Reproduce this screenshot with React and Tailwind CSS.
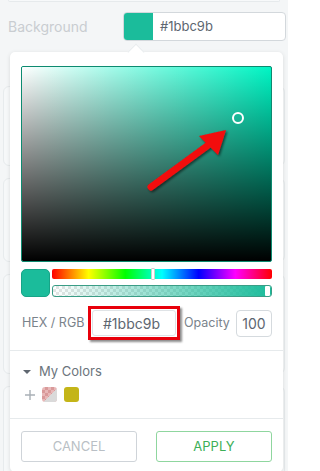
import React from 'react';

const font = { fontFamily: 'Inter, "Noto Sans", sans-serif' };

export default function App() {
  return (
    <div className="relative w-[288px] h-[471px] overflow-hidden bg-[#f4f6f7]" style={font}>
      {/* page behind the popover */}
      <div className="h-[2px] mx-[8px] rounded-b-md border-b border-x border-[#e6eaec] bg-[#f7f9fa]" />
      <div className="flex items-center h-[29px] mt-[10px] pl-[8px] pr-[2px] justify-between">
        <span className="text-[14px] text-[#c9cdd1]">Background</span>
        <div className="flex h-[29px] w-[163px] rounded-[4px] border border-[#d3d8dc] bg-white overflow-hidden">
          <div className="w-[29px] h-full bg-[#1bbc9b]" />
          <span className="flex items-center pl-[7px] text-[13px] text-[#5d6670]">#1bbc9b</span>
        </div>
      </div>
      <div className="flex flex-col gap-[12px] mt-[45px] px-[3px]">
        <div className="h-[80px] rounded-md border border-[#e7ebed] bg-[#f6f8f9]" />
        <div className="h-[84px] rounded-md border border-[#e7ebed] bg-[#f6f8f9]" />
        <div className="h-[100px] rounded-md border border-[#e7ebed] bg-[#f6f8f9]" />
        <div className="h-[100px] rounded-md border border-[#e7ebed] bg-[#f6f8f9]" />
      </div>

      {/* popover */}
      <div className="absolute left-[10px] top-[52px] w-[273px] rounded-[5px] bg-white shadow-[0_1px_4px_rgba(0,0,0,0.12)]">
        <div className="absolute -top-[6px] left-[120px] w-[12px] h-[12px] rotate-45 bg-white border-l border-t border-[#e8ecee]" />
        <div className="relative px-[11px] pt-[14px]">
          <div className="relative h-[196px] rounded-[2px] bg-[hsl(168,100%,48%)] overflow-hidden border border-[#0d8a70]">
            <div className="absolute inset-0 bg-gradient-to-r from-white to-transparent" />
            <div className="absolute inset-0 bg-gradient-to-b from-transparent to-black" />
            <div className="absolute left-[210px] top-[45px] w-[12px] h-[12px] rounded-full border-2 border-white" />
          </div>
          <svg className="absolute left-[129px] top-[75px]" width="100" height="80" viewBox="0 0 100 80">
            <defs>
              <filter id="sh" x="-20%" y="-20%" width="140%" height="140%">
                <feDropShadow dx="1.5" dy="1.5" stdDeviation="1" floodColor="#000" floodOpacity="0.55" />
              </filter>
            </defs>
            <g filter="url(#sh)">
              <line x1="12" y1="60" x2="68" y2="19" stroke="#f20d0d" strokeWidth="7" strokeLinecap="round" />
              <polygon points="87,3 60,9 79,28" fill="#f20d0d" />
            </g>
          </svg>
          <div className="flex gap-[2px] mt-[7px]">
            <div className="w-[29px] h-[28px] rounded-[5px] bg-[#1bbc9b] border border-[#17a487]" />
            <div className="flex-1 flex flex-col gap-[6px]">
              <div className="relative h-[10px] rounded-[2px] bg-[linear-gradient(to_right,#ff0000,#ffff00,#00ff00,#00ffff,#0000ff,#ff00ff,#ff0000)]">
                <div className="absolute left-[99px] -top-[1px] w-[4px] h-[12px] rounded-[1px] bg-white border border-[#ccc]" />
              </div>
              <div className="relative h-[12px] rounded-[3px] border border-[#3a9d86] overflow-hidden bg-[repeating-conic-gradient(#e4e4e4_0%_25%,#fff_0%_50%)] bg-[length:6px_6px]">
                <div className="absolute inset-0 bg-gradient-to-r from-[rgba(27,188,155,0)] to-[#1bbc9b]" />
                <div className="absolute right-[1px] top-[0px] w-[5px] h-[10px] rounded-[1px] bg-white" />
              </div>
            </div>
          </div>
          <div className="flex items-center mt-[9px] h-[34px]">
            <span className="text-[12.5px] text-[#7a838b] w-[67px] pl-[1px]">HEX / RGB</span>
            <div className="w-[92px] h-[34px] border-[3px] border-[#e8000b] shadow-[2px_2px_2px_rgba(0,0,0,0.45)] p-[1px]">
              <div className="h-full rounded-[3px] border border-[#dfe3e6] flex items-center pl-[10px] text-[14px] text-[#5d6670]">#1bbc9b</div>
            </div>
            <span className="ml-[4px] text-[12.5px] text-[#7a838b]">Opacity</span>
            <div className="ml-auto w-[36px] h-[27px] rounded-[4px] border border-[#d5dade] flex items-center justify-center text-[14px] text-[#5d6670]">100</div>
          </div>
        </div>
        <div className="mt-[10px] border-t border-[#e6eaec]" />
        <div className="px-[11px] pt-[13px] pb-[16px]">
          <div className="flex items-center gap-[7px] h-[15px]">
            <svg width="10" height="6" viewBox="0 0 10 6" className="ml-[1px]"><polygon points="1,1 9,1 5,5" fill="#5f6770" /></svg>
            <span className="text-[13px] text-[#6b747c]">My Colors</span>
          </div>
          <div className="flex items-center mt-[8px] gap-[6px] h-[15px]">
            <svg width="12" height="12" viewBox="0 0 12 12" className="ml-[3px]">
              <path d="M6 1v10M1 6h10" stroke="#a9b0b6" strokeWidth="1.4" />
            </svg>
            <div className="w-[15px] h-[15px] rounded-[3px] overflow-hidden relative bg-[repeating-conic-gradient(#d99a9a_0%_25%,#e8b8b8_0%_50%)] bg-[length:6px_6px]">
              <div className="absolute inset-0 bg-[linear-gradient(135deg,transparent_55%,#dadada_55%)]" />
            </div>
            <div className="w-[15px] h-[15px] ml-[1px] rounded-[3px] bg-[#c4b518]" />
          </div>
        </div>
        <div className="border-t border-[#e6eaec]" />
        <div className="flex justify-between px-[11px] pt-[12px] pb-[10px]">
          <button className="w-[116px] h-[31px] rounded-[3px] border border-[#cfd4d9] text-[13px] text-[#b9bfc5]">CANCEL</button>
          <button className="w-[116px] h-[31px] rounded-[3px] border border-[#8fd69f] text-[13px] text-[#3daf57]">APPLY</button>
        </div>
      </div>
    </div>
  );
}
